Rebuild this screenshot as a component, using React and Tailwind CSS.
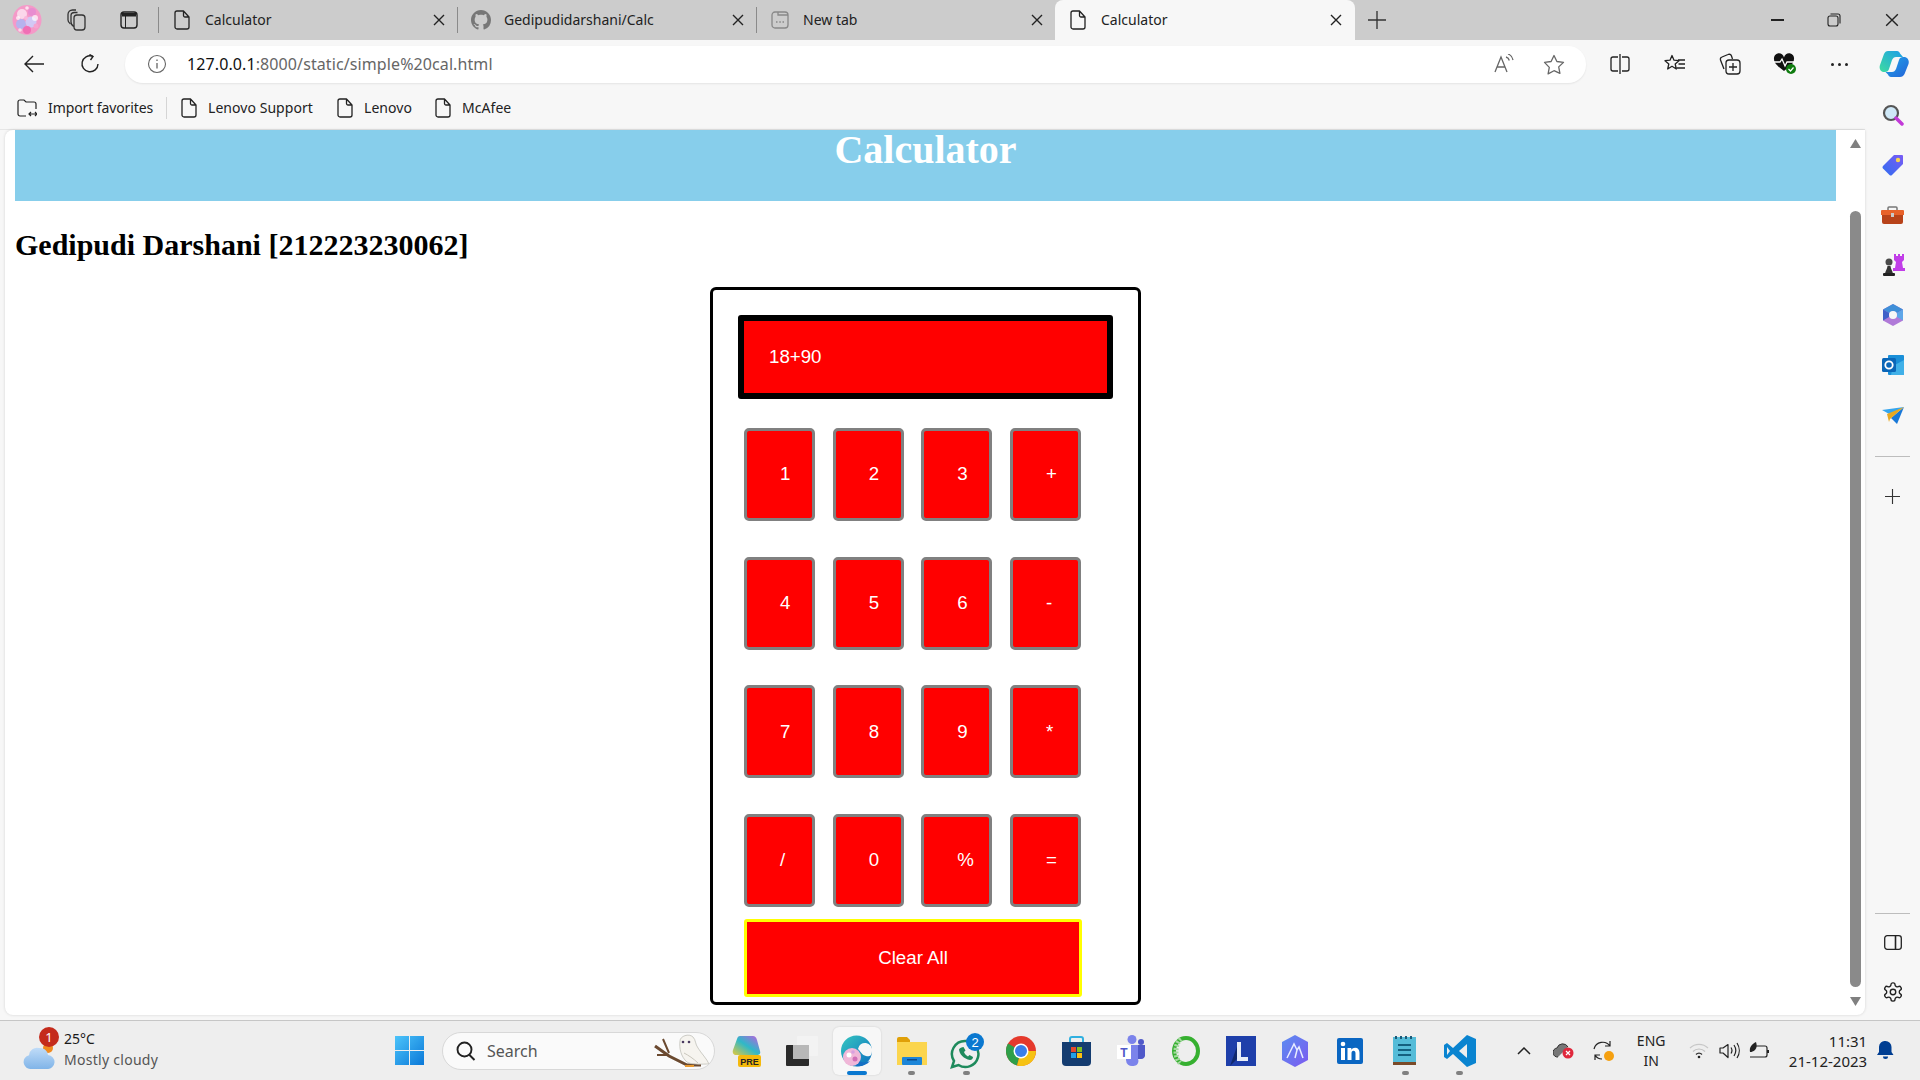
import React from "react";

const Doc = ({ c = "#222" }) => (
  <svg width="16" height="20" viewBox="0 0 16 20" fill="none" stroke={c} strokeWidth="1.3">
    <path d="M3 1h6.5v4.500a1.500 1.500 0 0 0 1.500 1.500h4V17a2 2 0 0 1-2 2H3a2 2 0 0 1-2-2V3a2 2 0 0 1 2-2zM9.500 1L15 7" strokeLinejoin="round" />
  </svg>
);
const Cross = ({ s = 12, w = 1.4 }) => (
  <svg width={s} height={s} viewBox="0 0 12 12" stroke="#222" strokeWidth={w}><path d="M1 1l10 10M11 1L1 11" /></svg>
);
const PlusI = ({ s = 16, c = "#333" }) => (
  <svg width={s} height={s} viewBox="0 0 16 16" stroke={c} strokeWidth="1.2"><path d="M8 0v16M0 8h16" /></svg>
);

const Profile = () => (
  <svg width="30" height="30" viewBox="0 0 30 30">
    <ellipse cx="15" cy="15" rx="14.500" ry="15" fill="#f49ac8" />
    <circle cx="10" cy="9" r="5" fill="#fbd7ea" /><circle cx="20" cy="7" r="4" fill="#e88dd0" />
    <circle cx="9" cy="19" r="5" fill="#b7b2ee" /><circle cx="19" cy="17" r="5.500" fill="#d2c8f5" />
    <circle cx="15" cy="25" r="4" fill="#f06fb5" /><circle cx="23" cy="13" r="3" fill="#fff" opacity=".7" />
    <circle cx="6" cy="13" r="2" fill="#fff" opacity=".7" />
    <circle cx="14" cy="13" r="2" fill="#f8b8dc" /><circle cx="24" cy="21" r="2.500" fill="#f6a4d0" />
    <circle cx="8" cy="25" r="1.800" fill="#fff" opacity=".6" /><circle cx="15" cy="3" r="1.800" fill="#fff" opacity=".7" />
  </svg>
);
const CollTab = () => (
  <svg width="20" height="22" viewBox="0 0 20 22" fill="none" stroke="#333" strokeWidth="1.3">
    <rect x="7" y="6" width="11" height="15" rx="3" /><path d="M7 17.500c-2-1-3-2.500-3-4.500V6.500c0-2 1.500-3 3.500-3h3" /><path d="M3.500 15C2 14 1 12.500 1 11V5.500C1 3 3 1 5.500 1H9" />
  </svg>
);
const VTabs = () => (
  <svg width="18" height="18" viewBox="0 0 18 18" fill="none"><rect x="1" y="1" width="16" height="16" rx="3" stroke="#222" strokeWidth="1.400" /><path d="M2 2h14v3.500H2z" fill="#222" /><path d="M5.500 5v12" stroke="#222" strokeWidth="1" /></svg>
);
const Github = () => (
  <svg width="20" height="20" viewBox="0 0 16 16" fill="#777"><path d="M8 0C3.580 0 0 3.580 0 8c0 3.540 2.290 6.530 5.470 7.590.4.070.55-.17.55-.38 0-.19-.01-.82-.01-1.490-2.010.37-2.530-.49-2.690-.94-.09-.23-.48-.94-.82-1.130-.28-.15-.68-.52-.01-.53.63-.01 1.080.58 1.230.82.72 1.210 1.870.87 2.330.66.070-.52.280-.87.510-1.070-1.780-.2-3.640-.89-3.640-3.950 0-.87.310-1.590.820-2.150-.080-.2-.360-1.020.080-2.120 0 0 .670-.21 2.200.82.640-.18 1.320-.27 2-.27s1.360.09 2 .27c1.530-1.040 2.200-.82 2.200-.82.440 1.100.160 1.920.080 2.120.510.560.820 1.270.820 2.150 0 3.070-1.870 3.750-3.650 3.950.290.250.540.730.540 1.480 0 1.070-.01 1.930-.01 2.200 0 .210.150.460.550.380A8.010 8.010 0 0 0 16 8c0-4.420-3.580-8-8-8z" /></svg>
);
const NewTabI = () => (
  <svg width="18" height="18" viewBox="0 0 18 18" fill="none" stroke="#888" strokeWidth="1.3"><rect x="1" y="1" width="16" height="16" rx="3" /><path d="M7 1v3h10" /><path d="M5 11h1.500M8.300 11h1.500M11.500 11H13" strokeWidth="1.500" /></svg>
);

const Tab = ({ icon, label, active }) => (
  <div className={active ? "w-[300px] h-10 flex items-center bg-[#f7f7f7] rounded-t-lg shrink-0" : "w-[299px] h-[26px] flex items-center border-r border-[#8a8a8a] shrink-0"}>
    <div className="w-[46px] flex justify-center">{icon}</div>
    <div className="flex-1 text-[14px] text-[#222] leading-none">{label}</div>
    <div className={active ? "w-[38px] flex pl-[13px]" : "w-[38px] flex pl-[14px]"}><Cross /></div>
  </div>
);

const TabBar = () => (
  <div className="h-10 bg-[#cccccc] flex items-center shrink-0">
    <div className="w-[54px] flex justify-center"><Profile /></div>
    <div className="w-[46px] flex justify-center"><CollTab /></div>
    <div className="w-[58px] flex justify-center"><VTabs /></div>
    <div className="w-px h-[26px] bg-[#8a8a8a]" />
    <Tab icon={<Doc />} label="Calculator" />
    <Tab icon={<Github />} label="Gedipudidarshani/Calc" />
    <div className="w-[298px] h-[26px] flex items-center shrink-0">
      <div className="w-[46px] flex justify-center"><NewTabI /></div>
      <div className="flex-1 text-[14px] text-[#222] leading-none">New tab</div>
      <div className="w-[38px] flex pl-[14px]"><Cross /></div>
    </div>
    <Tab active icon={<Doc />} label="Calculator" />
    <div className="w-[44px] flex justify-center"><PlusI s={18} /></div>
    <div className="flex-1" />
    <div className="w-[57px] flex justify-center"><div className="w-[13px] h-[1.500px] bg-[#222]" /></div>
    <div className="w-[57px] flex justify-center pr-[2px]">
      <svg width="14" height="14" viewBox="0 0 14 14" fill="none" stroke="#222" strokeWidth="1.100"><rect x="1" y="3" width="10" height="10" rx="2" /><path d="M3.500 1H11a2 2 0 0 1 2 2v7.500" /></svg>
    </div>
    <div className="w-[57px] flex justify-center"><Cross s={14} w={1.200} /></div>
  </div>
);

const Copilot = ({ s = 32 }) => (
  <svg width={s} height={s} viewBox="0 0 32 32">
    <defs>
      <linearGradient id="cp1" x1="0" y1="1" x2="1" y2="0"><stop offset="0" stopColor="#3fdca0" /><stop offset="1" stopColor="#1b9de8" /></linearGradient>
      <linearGradient id="cp2" x1="0" y1="0" x2="1" y2="1"><stop offset="0" stopColor="#1fa6e9" /><stop offset="1" stopColor="#2563d8" /></linearGradient>
    </defs>
    <path d="M10 3h9c1.500 0 2.500 1 3 2.500L25 9h-7c-2 0-3 1-4 3l-3 9c-.5 2-2 3-4 3H5c-3-1-4-4-3-7l4-11C7 4 8 3 10 3z" fill="url(#cp1)" />
    <path d="M22 29h-9c-1.500 0-2.500-1-3-2.500L7.500 24H14c2 0 3-1 4-3l3-9c.5-2 2-3 4-3h2c3 1 4.500 4 3.500 7l-4 10c-1 2-2.500 3-4.500 3z" fill="url(#cp2)" />
  </svg>
);

const Toolbar = () => (
  <div className="h-12 bg-[#f7f7f7] flex items-center shrink-0">
    <div className="w-[10px]" />
    <div className="w-[48px] flex justify-center">
      <svg width="20" height="18" viewBox="0 0 20 18" fill="none" stroke="#222" strokeWidth="1.400"><path d="M20 9H1M9 1L1 9l8 8" /></svg>
    </div>
    <div className="w-[64px] flex justify-center">
      <svg width="20" height="20" viewBox="0 0 20 20" fill="none" stroke="#222" strokeWidth="1.400"><path d="M12.500 2.200A8 8 0 1 0 18 10" /><path d="M9.500 .5l3.500 2-2.500 3.500" /></svg>
    </div>
    <div className="w-[3px]" />
    <div className="w-[1461px] h-[37px] bg-white rounded-[18px] flex items-center shadow-[0_1px_2px_rgba(0,0,0,0.08)]">
      <div className="w-[62px] flex justify-center pl-px">
        <svg width="20" height="20" viewBox="0 0 20 20" fill="none" stroke="#666" strokeWidth="1.100"><circle cx="10" cy="10" r="8.500" /><path d="M10 9v5.500M10 5.500v1.500" strokeWidth="1.300" /></svg>
      </div>
      <div className="flex-1 text-[16px] tracking-[0.1px] leading-none pb-px font-['Noto_Sans',sans-serif]">
        <span className="text-[#111]">127.0.0.1</span><span className="text-[#666]">:8000/static/simple%20cal.html</span>
      </div>
      <div className="w-[40px] flex justify-center">
        <svg width="20" height="20" viewBox="0 0 20 20" fill="none" stroke="#666" strokeWidth="1.300"><path d="M1 18L7 3l6 15M3.300 13h7.500" /><path d="M12 3c2 .5 3 2 3.300 3.500M14 0c3 1 4.500 3.500 5 6" /></svg>
      </div>
      <div className="w-[10px]" />
      <div className="w-[40px] flex justify-center">
        <svg width="22" height="21" viewBox="0 0 22 21" fill="none" stroke="#666" strokeWidth="1.300"><path d="M11 1.500l2.900 6 6.600.9-4.800 4.500 1.200 6.500L11 16.700 5.100 19.900l1.200-6.500L1.500 8.400l6.600-.9z" strokeLinejoin="round" /></svg>
      </div>
      <div className="w-[12px]" />
    </div>
    <div className="w-[6px]" />
    <div className="w-[55px] flex justify-center">
      <svg width="20" height="20" viewBox="0 0 20 20" fill="none" stroke="#222" strokeWidth="1.300"><path d="M8 3H3a2 2 0 0 0-2 2v10a2 2 0 0 0 2 2h5M12 3h5a2 2 0 0 1 2 2v10a2 2 0 0 1-2 2h-5M10 0v20" /></svg>
    </div>
    <div className="w-[55px] flex justify-center">
      <svg width="22" height="20" viewBox="0 0 22 20" fill="none" stroke="#222" strokeWidth="1.300"><path d="M8 1.500l2 4.700 5 .5-3.800 3.300 1.100 5L8 12.300l-4.300 2.700 1.100-5L1 6.700l5-.5z" strokeLinejoin="round" /><path d="M14 6h7M14.500 10h6.500M12.500 14H21" /></svg>
    </div>
    <div className="w-[55px] flex justify-center">
      <svg width="22" height="22" viewBox="0 0 22 22" fill="none" stroke="#222" strokeWidth="1.300"><rect x="7" y="7" width="14" height="14" rx="3" /><path d="M14 10v8M10 14h8" /><path d="M5 16L1.500 7a2.500 2.500 0 0 1 1.500-3l6-2.500A2.500 2.500 0 0 1 12.500 3l1 3" /></svg>
    </div>
    <div className="w-[55px] flex justify-center">
      <svg width="24" height="22" viewBox="0 0 24 22">
        <path d="M11 18C6 14 1 11 1 6a5 5 0 0 1 10-1.500A5 5 0 0 1 21 6c0 5-5 8-10 12z" fill="#111" />
        <path d="M0 9h7l2-3 3 7 2-4h9" stroke="#fff" strokeWidth="1.300" fill="none" />
        <circle cx="18" cy="16" r="5" fill="#107c10" /><path d="M15.500 16l2 2 3-3.500" stroke="#fff" strokeWidth="1.200" fill="none" />
      </svg>
    </div>
    <div className="w-[55px] flex justify-center gap-[4px]">
      <div className="w-[3px] h-[3px] rounded-full bg-[#222]" /><div className="w-[3px] h-[3px] rounded-full bg-[#222]" /><div className="w-[3px] h-[3px] rounded-full bg-[#222]" />
    </div>
    <div className="flex-1 flex justify-center"><Copilot /></div>
  </div>
);

const Bookmark = ({ w, label }) => (
  <div className={w + " flex items-center"}>
    <div className="w-[18px] flex justify-center"><Doc c="#222" /></div>
    <div className="ml-[10px] text-[14px] text-[#222] tracking-[0.05px] whitespace-nowrap">{label}</div>
  </div>
);

const Bookmarks = () => (
  <div className="h-[42px] flex items-center shrink-0 border-b border-[#e6e6e6] pb-[2px]">
    <div className="w-[17px]" />
    <div className="w-[149px] flex items-center">
      <svg width="20" height="20" viewBox="0 0 20 20" fill="none" stroke="#222" strokeWidth="1.200"><path d="M9 18H3a2 2 0 0 1-2-2V4a2 2 0 0 1 2-2h4l2 2h8a2 2 0 0 1 2 2v5" /><path d="M12 16h8M14 14l-2 2 2 2M18 14l2 2-2 2" /></svg>
      <div className="ml-[11px] text-[14px] text-[#222] tracking-[-0.1px] whitespace-nowrap">Import favorites</div>
    </div>
    <div className="w-px h-[22px] bg-[#d5d5d5]" />
    <div className="w-[13px]" />
    <Bookmark w="w-[156px]" label="Lenovo Support" />
    <Bookmark w="w-[98px]" label="Lenovo" />
    <Bookmark w="w-[100px]" label="McAfee" />
  </div>
);

const KEYS = ["1", "2", "3", "+", "4", "5", "6", "-", "7", "8", "9", "*", "/", "0", "%", "="];

const Calculator = () => (
  <div className="w-[431px] h-[718px] mx-auto border-[3px] border-black rounded-[6px] pt-[25px] pl-[25px] font-['Liberation_Sans',sans-serif] shrink-0">
    <div className="w-[375px] h-[84px] bg-[#ff0000] border-[6px] border-black rounded-[3px] flex items-center pl-[25px] text-white text-[18.700px]">18+90</div>
    <div className="ml-[6px] mt-[29px] grid grid-cols-[71px_71px_71px_71px] gap-x-[17.670px] gap-y-[35.670px]">
      {KEYS.map((k) => (
        <button key={k} className="h-[93px] bg-[#ff0000] border-[3px] border-[#808080] rounded-[5px] text-white text-[18.700px] text-left pl-[33px]">{k}</button>
      ))}
    </div>
    <button className="ml-[6px] mt-[12px] w-[338px] h-[78px] block bg-[#ff0000] border-[3px] border-[#ffff00] rounded-[3px] text-white text-[18.700px]">Clear All</button>
  </div>
);

const PagePanel = () => (
  <div className="flex-1 ml-[5px] mb-[5px] bg-white rounded-b-lg rounded-tl-lg flex shadow-[0_0_3px_rgba(0,0,0,0.15)]">
    <div className="w-[1845px] pl-[10px] pr-[14px] font-['Liberation_Serif',serif]">
      <div className="h-[71px] bg-[#87ceeb] text-center text-white text-[40px] font-bold leading-[40px]">Calculator</div>
      <div className="h-[86px] pt-[26px] text-black text-[30px] font-bold leading-[36px] whitespace-nowrap">Gedipudi Darshani [212223230062]</div>
      <Calculator />
    </div>
    <div className="w-[15px] flex flex-col items-start">
      <div className="w-[11px] h-[14px] mt-[9px] flex justify-center">
        <svg width="11" height="9" viewBox="0 0 11 9"><path d="M5.500 0L11 9H0z" fill="#808080" /></svg>
      </div>
      <div className="w-[11px] h-[776px] mt-[58px] bg-[#8a8a8a] rounded-full" />
      <div className="w-[11px] mt-[10px] flex justify-center">
        <svg width="11" height="9" viewBox="0 0 11 9"><path d="M5.500 9L11 0H0z" fill="#808080" /></svg>
      </div>
    </div>
  </div>
);

const SideSlot = ({ children }) => <div className="h-[50px] flex items-center justify-center">{children}</div>;

const Sidebar = () => (
  <div className="w-[55px] h-full flex flex-col items-stretch pt-[2px] pb-[3px] shrink-0">
    <SideSlot>
      <svg width="22" height="22" viewBox="0 0 22 22"><circle cx="9" cy="9" r="7" fill="#cfe8f7" stroke="#555" strokeWidth="2.200" /><path d="M14 14l6 6" stroke="#c23ad8" strokeWidth="3.500" strokeLinecap="round" /></svg>
    </SideSlot>
    <SideSlot>
      <svg width="22" height="22" viewBox="0 0 22 22"><defs><linearGradient id="tg" x1="0" y1="1" x2="1" y2="0"><stop offset="0" stopColor="#2f6df0" /><stop offset="1" stopColor="#7a5cf5" /></linearGradient></defs><path d="M1 12L12 1h8a1 1 0 0 1 1 1v8L10 21a2 2 0 0 1-2.500 0L1 14.500a2 2 0 0 1 0-2.500z" fill="url(#tg)" /><circle cx="16" cy="6" r="2.200" fill="#f7d354" /></svg>
    </SideSlot>
    <SideSlot>
      <svg width="23" height="18" viewBox="0 0 23 18"><path d="M7 4V2a1 1 0 0 1 1-1h7a1 1 0 0 1 1 1v2" fill="none" stroke="#777" strokeWidth="1.500" /><path d="M0 5a1 1 0 0 1 1-1h21a1 1 0 0 1 1 1v4H0z" fill="#e8622a" /><path d="M1 9h21v7a2 2 0 0 1-2 2H3a2 2 0 0 1-2-2z" fill="#b8431a" /><rect x="10" y="7" width="3" height="4" fill="#c9c9c9" /></svg>
    </SideSlot>
    <SideSlot>
      <svg width="24" height="24" viewBox="0 0 24 24"><path d="M14 1h2v2h2V1h2v2h2V1h2v6l-2 2 1 6h2v3H13v-3h2l1-6-2-2z" fill="#c13ee8" transform="translate(-1 0)" /><circle cx="8" cy="9" r="3.500" fill="#4a4a4a" /><path d="M4 22c0-4 2-5 2.500-9h3C10 17 12 18 12 22z" fill="#333" /><rect x="2" y="20" width="12" height="3" rx="1" fill="#222" /></svg>
    </SideSlot>
    <SideSlot>
      <svg width="22" height="24" viewBox="0 0 22 24" fill="none"><path d="M11 1l10 5.500v11L11 23 1 17.500v-11z" fill="#b07ad8" /><path d="M11 1l10 5.500-6 3.500-4-2-4 2-6-3.500z" fill="#3f8fd8" /><path d="M1 6.500l6 3.500v4l-6 3.500z" fill="#3f60c8" /><path d="M21 17.500L15 14v-4l6-3.500z" fill="#5ea6e8" /><circle cx="11" cy="12" r="4" fill="#f7f7f7" /></svg>
    </SideSlot>
    <SideSlot>
      <svg width="22" height="22" viewBox="0 0 22 22"><rect x="6" y="1" width="16" height="20" rx="1" fill="#1a8fd8" /><path d="M11 12l11-6v14a1 1 0 0 1-1 1H9z" fill="#40b0e8" /><rect x="0" y="4" width="14" height="14" rx="1.500" fill="#0a66b8" /><circle cx="7" cy="11" r="3.700" fill="none" stroke="#fff" strokeWidth="1.800" /></svg>
    </SideSlot>
    <SideSlot>
      <svg width="22" height="17" viewBox="0 0 22 17"><path d="M0 3l22-3-13 8z" fill="#35a5ee" /><path d="M22 0L15 17 9 11z" fill="#1878d8" /><path d="M5 7L22 0 8 12 7 15z" fill="#e8a820" /></svg>
    </SideSlot>
    <div className="h-px w-[35px] bg-[#bdbdbd] ml-[10px] mt-[16px]" />
    <div className="h-[40px] mt-[19px] flex items-center justify-center"><PlusI s={15} /></div>
    <div className="flex-1" />
    <div className="h-px w-[35px] bg-[#bdbdbd] ml-[10px] mb-[3px]" />
    <SideSlot>
      <svg width="18" height="15" viewBox="0 0 18 15" fill="none" stroke="#222" strokeWidth="1.300"><rect x=".7" y=".7" width="16.600" height="13.600" rx="2.500" /><path d="M11.500 1v13" strokeWidth="1.600" /></svg>
    </SideSlot>
    <SideSlot>
      <svg width="22" height="22" viewBox="0 0 24 24" fill="none" stroke="#222" strokeWidth="1.500"><path d="M12.220 2h-.44a2 2 0 0 0-2 2v.180a2 2 0 0 1-1 1.730l-.43.250a2 2 0 0 1-2 0l-.150-.080a2 2 0 0 0-2.730.730l-.220.380a2 2 0 0 0 .730 2.730l.150.100a2 2 0 0 1 1 1.720v.510a2 2 0 0 1-1 1.740l-.150.090a2 2 0 0 0-.730 2.730l.220.380a2 2 0 0 0 2.730.730l.150-.080a2 2 0 0 1 2 0l.430.250a2 2 0 0 1 1 1.730V20a2 2 0 0 0 2 2h.440a2 2 0 0 0 2-2v-.180a2 2 0 0 1 1-1.730l.430-.250a2 2 0 0 1 2 0l.150.080a2 2 0 0 0 2.730-.730l.220-.390a2 2 0 0 0-.730-2.730l-.150-.080a2 2 0 0 1-1-1.740v-.500a2 2 0 0 1 1-1.740l.150-.090a2 2 0 0 0 .730-2.730l-.220-.380a2 2 0 0 0-2.730-.730l-.150.080a2 2 0 0 1-2 0l-.430-.250a2 2 0 0 1-1-1.730V4a2 2 0 0 0-2-2z" /><circle cx="12" cy="12" r="3" /></svg>
    </SideSlot>
  </div>
);

const App1 = () => (
  <svg width="30" height="32" viewBox="0 0 30 32">
    <defs><linearGradient id="cpp" x1="0" y1="1" x2="1" y2="0"><stop offset="0" stopColor="#e3c93b" /><stop offset=".5" stopColor="#2fb8c8" /><stop offset="1" stopColor="#c35be0" /></linearGradient></defs>
    <path d="M8 1h13c2 0 3 1 4 4l3 11c1 3-1 4-3 4H4c-2 0-4-2-3-5L5 4c.5-2 1.500-3 3-3z" fill="url(#cpp)" />
    <rect x="6" y="20" width="23" height="12" rx="2" fill="#f5b90c" />
    <text x="17.500" y="29.500" textAnchor="middle" fontSize="9" fontWeight="700" fill="#222" fontFamily="Liberation Sans">PRE</text>
  </svg>
);
const AppTask = () => (
  <svg width="32" height="30" viewBox="0 0 32 30"><rect x="11" y="0" width="21" height="20" rx="1" fill="#f3f3f3" /><rect x="0" y="9" width="23" height="21" rx="1" fill="#2a2a2a" /><rect x="7" y="9" width="16" height="14" fill="#b8b8b8" /></svg>
);
const AppEdge = () => (
  <svg width="31" height="32" viewBox="0 0 31 32">
    <defs><linearGradient id="eg" x1="0" y1="0" x2="1" y2="1"><stop offset="0" stopColor="#36c7c0" /><stop offset="1" stopColor="#0c6fc0" /></linearGradient></defs>
    <circle cx="15.500" cy="16" r="15.500" fill="url(#eg)" />
    <path d="M17 14a6 6 0 0 1 14 2c0 5-3 6-6 5-4-1-5-4-8-7z" fill="#f7f7f7" />
    <path d="M15 31c5 1 11-1 14-5-4 2-9 2-12-1z" fill="#1470c4" />
    <circle cx="11" cy="22" r="9" fill="#f0b7d8" /><circle cx="8" cy="20" r="2.500" fill="#fff" /><circle cx="14" cy="24" r="2.500" fill="#d070b8" /><circle cx="12" cy="17" r="1.800" fill="#d8a0e0" />
  </svg>
);
const AppFolder = () => (
  <svg width="30" height="28" viewBox="0 0 30 28"><path d="M0 2a2 2 0 0 1 2-2h8l3 3v4H0z" fill="#e0a008" /><rect x="0" y="5" width="30" height="23" fill="#fbd54e" /><rect x="5" y="20" width="20" height="8" fill="#1c85d8" rx="1" /><rect x="10" y="22" width="10" height="1.500" fill="#0a4a8a" /></svg>
);
const AppWA = () => (
  <svg width="36" height="36" viewBox="0 0 36 36">
    <path d="M16 8a13 13 0 0 0-11 20l-2 6 6.500-2A13 13 0 1 0 16 8z" fill="none" stroke="#1e8a5c" strokeWidth="2.500" />
    <path d="M10 16c0 5 5 10 11 11 2 0 3-2 3-3l-3.500-2-1.500 1.500c-2-1-3.500-3-4-4.500l1.500-1.500-2-3.500c-1.500 0-4 1-4.500 2.500z" fill="#1e8a5c" />
    <circle cx="26" cy="9" r="9" fill="#0a78d0" />
    <text x="26" y="13.500" textAnchor="middle" fontSize="13" fill="#fff" fontFamily="Liberation Sans">2</text>
  </svg>
);
const AppChrome = () => (
  <svg width="30" height="30" viewBox="0 0 30 30"><circle cx="15" cy="15" r="15" fill="#e5392c" /><path d="M15 15L2 7.500A15 15 0 0 0 11 29.500z" fill="#2f9f49" /><path d="M15 15h15A15 15 0 0 1 11 29.500z" fill="#f6c213" /><circle cx="15" cy="15" r="7.500" fill="#fff" /><circle cx="15" cy="15" r="6" fill="#3a7ee8" /></svg>
);
const AppStore = () => (
  <svg width="29" height="30" viewBox="0 0 29 30"><path d="M8 6V3a2 2 0 0 1 2-2h9a2 2 0 0 1 2 2v3" fill="none" stroke="#30b0e0" strokeWidth="2" /><path d="M0 6h29v20a4 4 0 0 1-4 4H4a4 4 0 0 1-4-4z" fill="#143c70" /><rect x="9" y="11" width="5" height="5" fill="#e5492c" /><rect x="15" y="11" width="5" height="5" fill="#80c020" /><rect x="9" y="17" width="5" height="5" fill="#22a0e8" /><rect x="15" y="17" width="5" height="5" fill="#fcc010" /></svg>
);
const AppTeams = () => (
  <svg width="28" height="32" viewBox="0 0 28 32"><circle cx="15" cy="4.500" r="4.500" fill="#7b83eb" /><circle cx="24" cy="7" r="3" fill="#5059c9" /><path d="M9 10h12v14a5 5 0 0 1-5 7 6 6 0 0 1-7-6z" fill="#7b83eb" /><path d="M21 10h7v9a4 4 0 0 1-4 5h-3z" fill="#5059c9" /><rect x="0" y="10" width="14" height="14" fill="#fff" /><text x="7" y="21.500" textAnchor="middle" fontSize="12" fontWeight="700" fill="#5059c9" fontFamily="Liberation Sans">T</text></svg>
);
const AppRing = () => (
  <svg width="30" height="32" viewBox="0 0 30 32" fill="none"><ellipse cx="15" cy="16" rx="12" ry="13" stroke="#36b030" strokeWidth="4" /><path d="M10 4C4 8 3 22 9 28" stroke="#a5d8a0" strokeWidth="5" strokeDasharray="2 1.500" /></svg>
);
const AppL = () => (
  <svg width="30" height="30" viewBox="0 0 30 30"><rect width="30" height="30" fill="#1e3faa" /><path d="M4 30l9-9V5l-9 25z" fill="#10296e" /><path d="M11 6h4v15h7v4H11z" fill="#e8eef8" /></svg>
);
const AppHex = () => (
  <svg width="28" height="32" viewBox="0 0 28 32"><defs><linearGradient id="hx" x1="0" y1="0" x2="1" y2="1"><stop offset="0" stopColor="#5b8df0" /><stop offset="1" stopColor="#7c5af0" /></linearGradient></defs><path d="M14 0l13 7v18l-13 7-13-7V7z" fill="url(#hx)" /><path d="M6 23L13 9l3 6M14 23l2-8 2-3 4 11" fill="none" stroke="#e8ecff" strokeWidth="1.500" /></svg>
);
const AppLI = () => (
  <svg width="26" height="26" viewBox="0 0 26 26"><rect width="26" height="26" rx="2" fill="#0a66c2" /><rect x="4" y="10" width="4" height="12" fill="#fff" /><circle cx="6" cy="6" r="2.300" fill="#fff" /><path d="M10.500 10h3.800v1.700c.8-1.300 2.200-2 3.800-2 3 0 4.400 2 4.400 5V22h-4v-6.500c0-1.700-.6-2.700-2-2.700s-2 1-2 2.700V22h-4z" fill="#fff" /></svg>
);
const AppNote = () => (
  <svg width="23" height="31" viewBox="0 0 23 31"><rect x="0" y="2" width="23" height="27" fill="#55bcd8" /><rect x="0" y="27" width="23" height="3" fill="#7a4a28" /><path d="M3 1v3M8 1v3M13 1v3M18 1v3" stroke="#1c5a78" strokeWidth="2" /><path d="M5 10h13M5 15h13M5 20h13" stroke="#14607f" strokeWidth="2" /></svg>
);
const AppVS = () => (
  <svg width="32" height="32" viewBox="0 0 32 32"><path d="M23 0l9 4v24l-9 4L9 19l-6 5-3-2v-12l3-2 6 5z" fill="#0a84d0" /><path d="M23 9l-8 7 8 7z" fill="#eeeeee" /><path d="M3 12l3 4-3 4z" fill="#eeeeee" /></svg>
);

const AppSlot = ({ children, dot, active }) => (
  <div className="w-[54.800px] h-12 flex items-center justify-center relative">
    {active && <div className="absolute left-[3px] top-0 w-[48px] h-12 bg-[#f7f7f7] rounded-md shadow-[0_0_2px_rgba(0,0,0,0.15)]" />}
    <div className="relative flex items-center justify-center">{children}</div>
    {dot && <div className="absolute left-[24px] bottom-0 w-[7px] h-[4px] rounded-full bg-[#808080]" />}
    {active && <div className="absolute left-[17px] bottom-0 w-[20px] h-[4px] rounded-full bg-[#0a78d0]" />}
  </div>
);

const Owl = () => (
  <svg width="60" height="36" viewBox="0 0 60 36">
    <path d="M1 13l14 10 18 9h14" fill="none" stroke="#6b4a30" strokeWidth="3" />
    <path d="M9 6l6 14M3 22l12 0" fill="none" stroke="#6b4a30" strokeWidth="2" />
    <path d="M26 8c0-5 9-8 13-4 3 3 2 7 5 11 3 5 9 11 11 16-6 0-18 1-22-2-6-5-8-14-7-21z" fill="#f6f4ef" stroke="#b8b8b0" strokeWidth=".7" />
    <path d="M30 20c4 2 10 6 14 10" stroke="#c9c6bc" strokeWidth="1" fill="none" />
    <circle cx="29" cy="9" r="1.300" fill="#4a3a60" /><circle cx="35" cy="9" r="1.300" fill="#4a3a60" />
    <path d="M31 33h9" stroke="#e89a30" strokeWidth="2" />
  </svg>
);

const Taskbar = () => (
  <div className="h-[60px] bg-[#eeeeee] border-t border-[#c6c6c6] flex items-center shrink-0 font-['Noto_Sans',sans-serif]">
    <div className="w-[395px] flex items-center pl-[23px] h-full">
      <div className="relative w-[41px] h-[44px]">
        <svg className="absolute left-0 top-[14px]" width="32" height="26" viewBox="0 0 32 26"><defs><linearGradient id="cl" x1="0" y1="0" x2="0" y2="1"><stop offset="0" stopColor="#c0dcf8" /><stop offset="1" stopColor="#80b4e8" /></linearGradient></defs><circle cx="25" cy="5" r="5" fill="#f08a20" /><path d="M8 26a7 7 0 0 1-2-13.800A8 8 0 0 1 16 5a8 8 0 0 1 9 7 7 7 0 0 1-1 14z" fill="url(#cl)" /></svg>
        <div className="absolute left-[16px] top-[-2px] w-[20px] h-[20px] rounded-full bg-[#c42b1c] text-white text-[13px] leading-[20px] text-center">1</div>
      </div>
      <div className="flex flex-col mb-[3px]">
        <div className="text-[14px] leading-[21px] text-[#1a1a1a]">25°C</div>
        <div className="text-[14px] leading-[21px] text-[#555] tracking-[0.28px] whitespace-nowrap">Mostly cloudy</div>
      </div>
    </div>
    <svg width="29" height="29" viewBox="0 0 29 29" className="shrink-0">
      <defs><linearGradient id="w" x1="0" y1="0" x2="1" y2="1"><stop offset="0" stopColor="#4cc4fa" /><stop offset="1" stopColor="#0a78d8" /></linearGradient></defs>
      <path d="M0 0h14v14H0zM15 0h14v14H15zM0 15h14v14H0zM15 15h14v14H15z" fill="url(#w)" />
    </svg>
    <div className="w-[18px]" />
    <div className="w-[273px] h-[38px] bg-[#fafafa] rounded-full border border-[#d8d8d8] flex items-center pl-[13px] overflow-hidden shrink-0">
      <svg width="20" height="20" viewBox="0 0 20 20" fill="none" stroke="#222" strokeWidth="1.900"><circle cx="8.500" cy="8.500" r="7" /><path d="M13 13.500l5.500 5.500" /></svg>
      <div className="ml-[11px] text-[16px] text-[#555]">Search</div>
      <div className="flex-1" />
      <Owl />
    </div>
    <div className="w-[5px]" />
    <AppSlot><App1 /></AppSlot>
    <AppSlot><AppTask /></AppSlot>
    <AppSlot active><AppEdge /></AppSlot>
    <AppSlot dot><AppFolder /></AppSlot>
    <AppSlot dot><AppWA /></AppSlot>
    <AppSlot><AppChrome /></AppSlot>
    <AppSlot><AppStore /></AppSlot>
    <AppSlot><AppTeams /></AppSlot>
    <AppSlot><AppRing /></AppSlot>
    <AppSlot><AppL /></AppSlot>
    <AppSlot><AppHex /></AppSlot>
    <AppSlot><AppLI /></AppSlot>
    <AppSlot dot><AppNote /></AppSlot>
    <AppSlot dot><AppVS /></AppSlot>
    <div className="w-[17px]" />
    <div className="w-[40px] flex justify-center">
      <svg width="14" height="8" viewBox="0 0 14 8" fill="none" stroke="#222" strokeWidth="1.500"><path d="M1 7l6-6 6 6" /></svg>
    </div>
    <div className="w-[40px] flex justify-center">
      <svg width="22" height="17" viewBox="0 0 22 17"><path d="M5 15a4.500 4.500 0 0 1-1-9 6 6 0 0 1 11-1" fill="#777" stroke="#333" strokeWidth="1" /><circle cx="15" cy="11" r="5.500" fill="#e0283c" /><path d="M13 9l4 4M17 9l-4 4" stroke="#fff" strokeWidth="1.200" /></svg>
    </div>
    <div className="w-[40px] flex justify-center">
      <svg width="22" height="22" viewBox="0 0 22 22" fill="none" stroke="#222" strokeWidth="1.200"><path d="M1 9a9 9 0 0 1 16-3M17 1v5h-5" /><path d="M9 19A8 8 0 0 1 2 15M2 20v-5h5" /><circle cx="16" cy="16" r="5" fill="#f5a010" stroke="none" /></svg>
    </div>
    <div className="w-[54px] text-center text-[14px] leading-[20px] text-[#222]"><div>ENG</div><div>IN</div></div>
    <div className="w-[6px]" />
    <div className="w-[30px] flex justify-center">
      <svg width="20" height="16" viewBox="0 0 20 16" fill="none" strokeWidth="1.200"><path d="M1 5a13 13 0 0 1 18 0" stroke="#c8c8c8" /><path d="M4 8.500a8.500 8.500 0 0 1 12 0" stroke="#c0c0c0" /><path d="M7 11.500a4 4 0 0 1 6 0" stroke="#333" /><circle cx="10" cy="14" r="1.300" fill="#222" /></svg>
    </div>
    <div className="w-[30px] flex justify-center">
      <svg width="21" height="17" viewBox="0 0 21 17" fill="none" stroke="#222" strokeWidth="1.200"><path d="M1 6v5h3l5 4.500v-13L4 6z" strokeLinejoin="round" /><path d="M12 5.500c1.300 2 1.300 4 0 6M15 3c2.300 3.500 2.300 7.500 0 11M18 1c3 4.500 3 10.500 0 15" /></svg>
    </div>
    <div className="w-[30px] flex justify-center">
      <svg width="22" height="18" viewBox="0 0 22 18" fill="none" stroke="#222" strokeWidth="1.200"><path d="M7 4h10a2 2 0 0 1 2 2v7a2 2 0 0 1-2 2H2" /><path d="M20 8v3" strokeWidth="2" /><path d="M2 10C1 5 4 2 8 0c1 3 1 6-1 8-2 1.500-3 2-5 2z" fill="#222" stroke="none" /></svg>
    </div>
    <div className="w-[93px] text-right text-[15px] leading-[20px] text-[#222]"><div>11:31</div><div className="whitespace-nowrap">21-12-2023</div></div>
    <div className="flex-1 flex justify-start pl-[10px]">
      <svg width="17" height="19" viewBox="0 0 17 19"><path d="M8.500 0a6 6 0 0 1 6 6v5l2 3H0l2-3V6a6 6 0 0 1 6.500-6z" fill="#003e92" /><path d="M6 15.500h5a2.500 2.500 0 0 1-5 0z" fill="#003e92" /></svg>
    </div>
  </div>
);

export default function App() {
  return (
    <div className="w-[1920px] h-[1080px] flex flex-col bg-[#f7f7f7] overflow-hidden font-['Noto_Sans',sans-serif]">
      <TabBar />
      <Toolbar />
      <div className="flex-1 flex min-h-0">
        <div className="flex-1 flex flex-col min-w-0">
          <Bookmarks />
          <PagePanel />
        </div>
        <Sidebar />
      </div>
      <Taskbar />
    </div>
  );
}
